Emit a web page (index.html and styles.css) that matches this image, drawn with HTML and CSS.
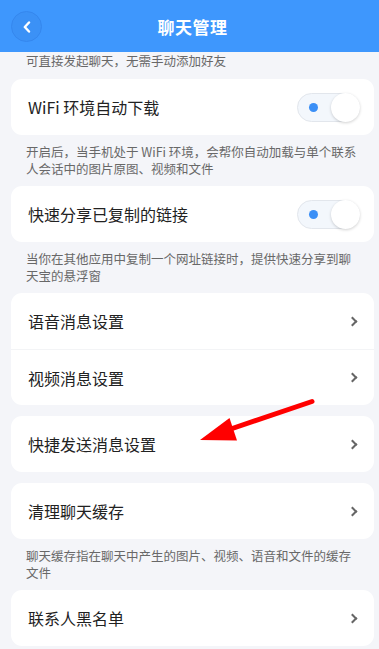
FILE: index.html
```html
<!DOCTYPE html>
<html lang="zh-CN">
<head>
    <meta charset="UTF-8">
    <meta name="viewport" content="width=device-width, initial-scale=1.0">
    <title>聊天管理</title>
    <link rel="stylesheet" href="styles.css">
</head>
<body>
    <div class="page">
        <div class="top-bar">
            <div class="back-btn">
                <svg width="8" height="12" viewBox="0 0 8 12"><path d="M6 1.5 L1.8 6 L6 10.5" fill="none" stroke="#fff" stroke-width="2.4" stroke-linecap="round" stroke-linejoin="round"/></svg>
            </div>
            <h1>聊天管理</h1>
        </div>

        <div class="content">
            <p class="note first">可直接发起聊天，无需手动添加好友</p>

            <div class="card">
                <div class="row">
                    <span>WiFi 环境自动下载</span>
                    <div class="switch"><span class="dot"></span><span class="knob"></span></div>
                </div>
            </div>
            <p class="note">开启后，当手机处于 WiFi 环境，会帮你自动加载与单个联系人会话中的图片原图、视频和文件</p>

            <div class="card">
                <div class="row">
                    <span>快速分享已复制的链接</span>
                    <div class="switch"><span class="dot"></span><span class="knob"></span></div>
                </div>
            </div>
            <p class="note">当你在其他应用中复制一个网址链接时，提供快速分享到聊天宝的悬浮窗</p>

            <div class="card">
                <div class="row">
                    <span>语音消息设置</span>
                    <i class="chev"></i>
                </div>
                <div class="row">
                    <span>视频消息设置</span>
                    <i class="chev"></i>
                </div>
            </div>

            <div class="card">
                <div class="row">
                    <span>快捷发送消息设置</span>
                    <i class="chev"></i>
                </div>
            </div>

            <div class="card">
                <div class="row">
                    <span>清理聊天缓存</span>
                    <i class="chev"></i>
                </div>
            </div>
            <p class="note">聊天缓存指在聊天中产生的图片、视频、语音和文件的缓存文件</p>

            <div class="card">
                <div class="row">
                    <span>联系人黑名单</span>
                    <i class="chev"></i>
                </div>
            </div>
        </div>

        <!-- 标注箭头 -->
        <svg class="mark-arrow" width="385" height="649" viewBox="0 0 385 649">
            <line x1="312" y1="401.5" x2="222" y2="432" stroke="#ff0000" stroke-width="5" stroke-linecap="round"/>
            <polygon points="200,440 229.5,418 237,440.5" fill="#ff0000"/>
        </svg>
    </div>
</body>
</html>
```

FILE: styles.css
```css
* { margin: 0; padding: 0; box-sizing: border-box; }
html, body { overflow: hidden; }
body { font-family: "Noto Sans CJK SC", "Noto Sans", sans-serif; background: #f4f5f9; color: #222; }
.page { position: relative; width: 385px; min-height: 649px; background: #f4f5f9; }

.top-bar { height: 52px; background: #3e97fd; display: flex; align-items: center; justify-content: center; position: relative; }
.top-bar h1 { color: #fff; font-size: 17px; font-weight: 700; letter-spacing: 0.5px; }
.back-btn { position: absolute; left: 11px; top: 11px; width: 31px; height: 31px; border-radius: 50%; background: #3b91f6; border: 1px solid #3587ee; display: flex; align-items: center; justify-content: center; }

.content { padding: 0 11px; }
.note { font-size: 12.5px; line-height: 17px; color: #686868; padding: 8px 15px 9px 15px; }
.note.first { padding-top: 0; padding-bottom: 10px; }

.card { background: #fff; border-radius: 11px; overflow: hidden; }
.card + .card { margin-top: 11px; }
.row { height: 56px; display: flex; align-items: center; justify-content: space-between; padding: 0 14px 0 17px; font-size: 16px; color: #222; }
.row + .row { border-top: 1px solid #f3f4f6; }

.switch { position: relative; width: 63px; height: 29px; border-radius: 15px; background: #f3f7fc; border: 1px solid #e2e6ec; margin-right: 0; }
.switch .dot { position: absolute; left: 11px; top: 9px; width: 9px; height: 9px; border-radius: 50%; background: #3b8ff6; }
.switch .knob { position: absolute; right: -1px; top: -1px; width: 29px; height: 29px; border-radius: 50%; background: #fff; box-shadow: 0 1px 3px rgba(0,0,0,0.18); }

.chev { display: block; width: 7px; height: 7px; border-top: 2px solid #666; border-right: 2px solid #666; transform: rotate(45deg); margin-right: 4px; }

.mark-arrow { position: absolute; left: 0; top: 0; pointer-events: none; }
```
